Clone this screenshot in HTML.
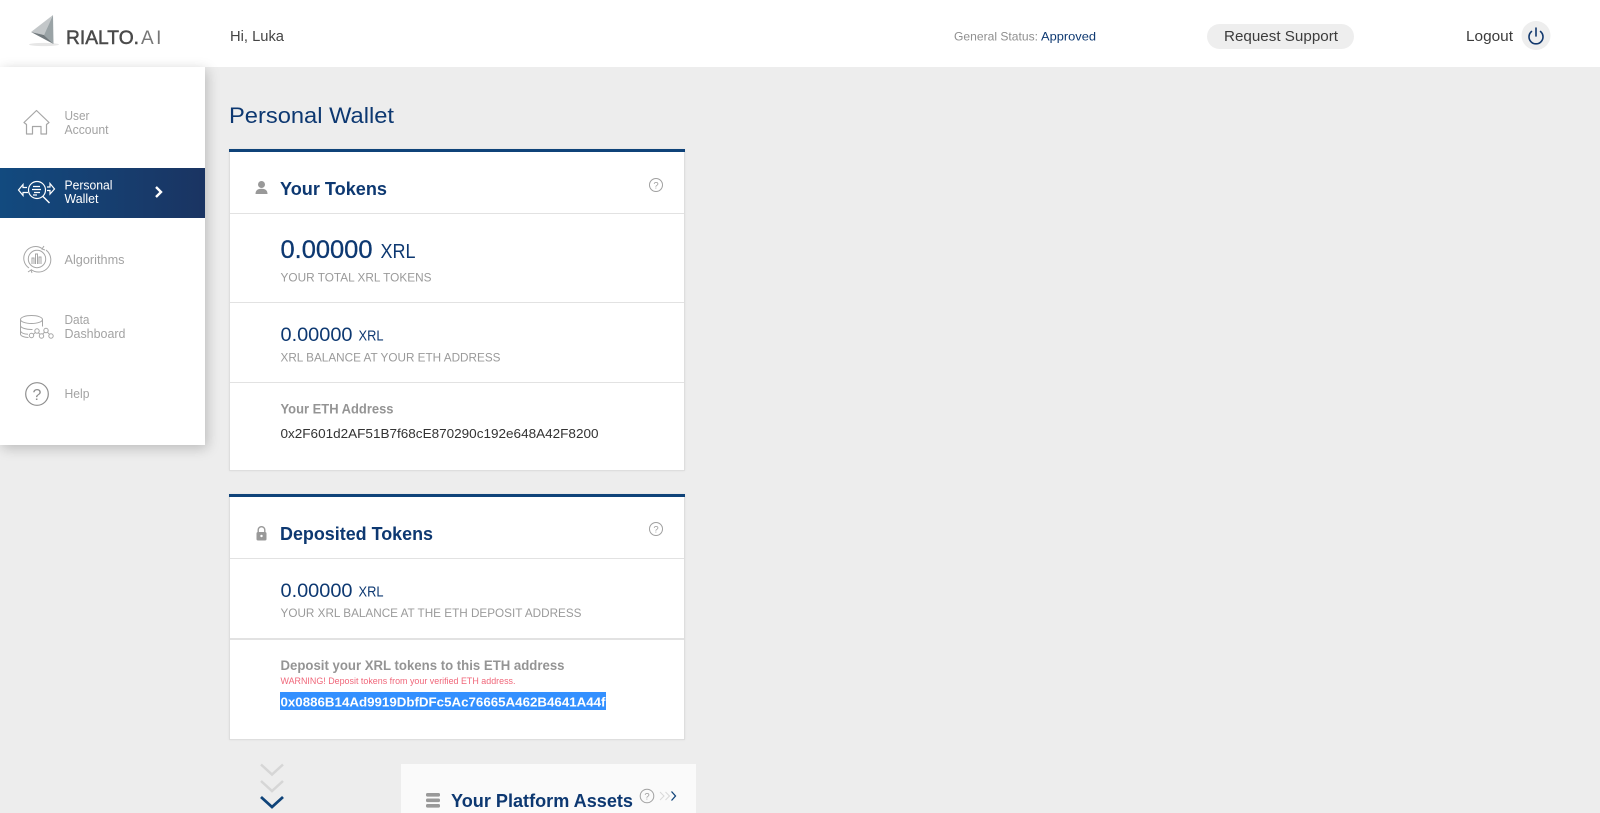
<!DOCTYPE html>
<html lang="en">
<head>
<meta charset="utf-8">
<title>Personal Wallet</title>
<style>
html,body{margin:0;padding:0;width:1600px;height:813px;overflow:hidden;background:#ededed}
body{position:relative;font-family:"Liberation Sans",sans-serif}
.b{position:absolute;box-sizing:border-box}
.top{left:0;top:0;width:1600px;height:67px;background:#fff}
.side{left:0;top:67px;width:205px;height:378px;background:#fff;box-shadow:2px 3px 12px rgba(0,0,0,.22)}
.act{left:0;top:168px;width:205px;height:50px;background:linear-gradient(90deg,#124a7f,#1a3462)}
.card{left:229px;width:456px;background:#fff;border:1px solid #dedede;border-top:0;box-shadow:0 0 2px rgba(0,0,0,.06)}
.bar{left:229px;width:456px;height:3px;background:#0f4379}
.ln{left:230px;width:454px;height:1px;background:#e2e2e2}
.plat{left:401px;top:764px;width:295px;height:49px;background:#fafafa}
.sel{left:280px;top:692px;width:326px;height:18px;background:#3390ff}
.pill{left:1207px;top:24px;width:147px;height:25px;border-radius:13px;background:#eeeeee}
svg{position:absolute;left:0;top:0}
text{font-family:"Liberation Sans",sans-serif}
.n{fill:#0d3871}
.g{fill:#9a9a9a}
.m{fill:#a3a3a3;font-size:12.5px}
.h{font-weight:700;font-size:18px;fill:#0d3871}
.i{fill:none;stroke:#999;stroke-width:1}
</style>
</head>
<body>
<div class="b top"></div>
<div class="b side"></div>
<div class="b act"></div>
<div class="b pill"></div>
<div class="b card" style="top:149px;height:322px"></div>
<div class="b bar" style="top:149px"></div>
<div class="b ln" style="top:213px"></div>
<div class="b ln" style="top:302px"></div>
<div class="b ln" style="top:382px"></div>
<div class="b card" style="top:494px;height:246px"></div>
<div class="b bar" style="top:494px"></div>
<div class="b ln" style="top:558px"></div>
<div class="b ln" style="top:638px;height:2px"></div>
<div class="b sel"></div>
<div class="b plat"></div>

<svg width="1600" height="813" viewBox="0 0 1600 813">
  <!-- logo -->
  <ellipse cx="44" cy="44.5" rx="15" ry="1.6" fill="#e6e6e6"/>
  <path d="M53 15L31 32L44 35Z" fill="#c3c7c9"/>
  <path d="M53 15L44 35L53.5 44Z" fill="#9aa3a6"/>
  <path d="M31 32L44 35L53.5 44Z" fill="#727a7e"/>
  <text x="66" y="44" font-size="19.500" fill="#4a4a4a" stroke="#4a4a4a" stroke-width=".5" textLength="73" lengthAdjust="spacingAndGlyphs">RIALTO.</text>
  <text x="141" y="44" font-size="19" fill="#777" letter-spacing="2.500">AI</text>

  <!-- header -->
  <text x="230" y="41" font-size="14.5" fill="#444" textLength="54" lengthAdjust="spacingAndGlyphs">Hi, Luka</text>
  <text x="954" y="40.5" font-size="12" fill="#8f8f8f" textLength="84" lengthAdjust="spacingAndGlyphs">General Status:</text>
  <text x="1041" y="40.5" font-size="12" fill="#0d3871" textLength="55" lengthAdjust="spacingAndGlyphs">Approved</text>
  <text x="1224" y="41" font-size="14.5" fill="#3c3c3c" textLength="114" lengthAdjust="spacingAndGlyphs">Request Support</text>
  <text x="1466" y="41" font-size="14.5" fill="#3c3c3c" textLength="47" lengthAdjust="spacingAndGlyphs">Logout</text>
  <circle cx="1536" cy="35.5" r="14.5" fill="#eeeeee"/>
  <path d="M1531.500 31.500a7 7 0 1 0 9 0" fill="none" stroke="#12386d" stroke-width="1.6" stroke-linecap="round"/>
  <path d="M1536 28v8" fill="none" stroke="#12386d" stroke-width="1.6" stroke-linecap="round"/>

  <!-- sidebar text -->
  <text class="m" x="64.500" y="120" textLength="25" lengthAdjust="spacingAndGlyphs">User</text>
  <text class="m" x="64.500" y="134" textLength="44" lengthAdjust="spacingAndGlyphs">Account</text>
  <text x="64.500" y="189.5" font-size="12.5" fill="#fff" textLength="48" lengthAdjust="spacingAndGlyphs">Personal</text>
  <text x="64.500" y="203" font-size="12.5" fill="#fff" textLength="34" lengthAdjust="spacingAndGlyphs">Wallet</text>
  <text class="m" x="64.500" y="264" textLength="60" lengthAdjust="spacingAndGlyphs">Algorithms</text>
  <text class="m" x="64.500" y="324" textLength="25" lengthAdjust="spacingAndGlyphs">Data</text>
  <text class="m" x="64.500" y="338" textLength="61" lengthAdjust="spacingAndGlyphs">Dashboard</text>
  <text class="m" x="64.500" y="398" textLength="25" lengthAdjust="spacingAndGlyphs">Help</text>
  <path d="M156 187l5 5l-5 5" fill="none" stroke="#fff" stroke-width="2.4"/>

  <!-- house -->
  <path d="M24 122.500L36.500 110.500L49 122.500L46.500 124.500V134H41V126.500H32.500V134H26.500V124.500Z" fill="none" stroke="#a6a6a6" stroke-width="1.200" stroke-linejoin="round"/>
  <!-- wallet icon -->
  <g fill="none" stroke="#fff" stroke-width="1.200">
    <circle cx="37" cy="190" r="8.500"/>
    <path d="M43 196.500l6.500 6.500" stroke-width="1.400"/>
    <path d="M33 186.500h7M32 189.500h9M34 192.500h6M33 195h4"/>
    <path d="M27 187.500h-4v-3l-4.500 5.500l4.500 5.500v-3h5"/>
    <path d="M47 187h3v-3.500l4.500 5.500l-4.500 5v-3.500h-3"/>
  </g>
  <!-- algorithms icon -->
  <g fill="none" stroke="#a6a6a6" stroke-width="1">
    <path d="M29 268a11.500 11.500 0 0 1 13-19.500M46 250a11.500 11.500 0 0 1-15 19.500"/>
    <circle cx="37" cy="259" r="8.700"/>
    <path d="M32 264v-6h2v6M35.500 264v-10h2v10M39 264v-7h2v7"/>
    <path d="M44 246l-2 3l3 1M28 272l3-2l1 3"/>
  </g>
  <!-- data icon -->
  <g fill="none" stroke="#a6a6a6" stroke-width="1">
    <ellipse cx="31.500" cy="319.500" rx="11" ry="4"/>
    <path d="M20.500 319.500v14.500c0 2 4 3.500 8 3.500M20.500 325.500c0 2.500 6 4.200 12 4M20.500 331c.5 1.800 3.500 3 7.500 3.300M42.500 319.500v7"/>
    <circle cx="31.500" cy="335.500" r="2.200"/><circle cx="37" cy="331" r="2.200"/><circle cx="41.500" cy="336" r="2.200"/><circle cx="46" cy="330.500" r="2.200"/><circle cx="51" cy="336" r="2.200"/>
    <path d="M33.300 334.200l2.200-1.700M38.300 332.700l1.900 1.700M42.700 334l2.100-2M47.500 332.300l2 2"/>
  </g>
  <!-- help icon -->
  <circle cx="37" cy="394" r="11.300" fill="none" stroke="#8e8e8e" stroke-width="1.200"/>
  <text x="37" y="400" font-size="16" fill="#8e8e8e" text-anchor="middle">?</text>

  <!-- main -->
  <text x="229" y="123" font-size="22" fill="#0d3871" textLength="165" lengthAdjust="spacingAndGlyphs">Personal Wallet</text>

  <!-- your tokens -->
  <circle cx="261.500" cy="184.500" r="3.500" fill="#999"/>
  <path d="M255.500 194c0-4 2.500-5.300 6-5.300s6 1.300 6 5.300z" fill="#999"/>
  <text class="h" x="280" y="195" textLength="107" lengthAdjust="spacingAndGlyphs">Your Tokens</text>
  <circle cx="656" cy="185" r="6.500" fill="none" stroke="#a0a0a0"/>
  <text x="656" y="188.500" font-size="9.500" fill="#a0a0a0" text-anchor="middle">?</text>
  <text class="n" x="280.500" y="258" font-size="25" stroke="#0d3871" stroke-width=".3" textLength="92" lengthAdjust="spacingAndGlyphs">0.00000</text>
  <text class="n" x="380.500" y="258" font-size="20" textLength="35" lengthAdjust="spacingAndGlyphs">XRL</text>
  <text class="g" x="280.500" y="281.500" font-size="12" textLength="151" lengthAdjust="spacingAndGlyphs">YOUR TOTAL XRL TOKENS</text>

  <text class="n" x="280.500" y="341" font-size="19.500" textLength="72" lengthAdjust="spacingAndGlyphs">0.00000</text>
  <text class="n" x="358.500" y="340.500" font-size="15" textLength="25" lengthAdjust="spacingAndGlyphs">XRL</text>
  <text class="g" x="280.500" y="361.500" font-size="12" textLength="220" lengthAdjust="spacingAndGlyphs">XRL BALANCE AT YOUR ETH ADDRESS</text>
  <text x="280.500" y="413.500" font-size="13.500" font-weight="700" fill="#949494" textLength="113" lengthAdjust="spacingAndGlyphs">Your ETH Address</text>
  <text x="280.500" y="438" font-size="13" fill="#333" textLength="318" lengthAdjust="spacingAndGlyphs">0x2F601d2AF51B7f68cE870290c192e648A42F8200</text>

  <!-- deposited -->
  <path d="M258.200 532v-2a3.300 3.300 0 0 1 6.600 0V532" fill="none" stroke="#999" stroke-width="1.400"/>
  <rect x="256.500" y="532" width="10" height="8.500" rx="1.500" fill="#999"/>
  <circle cx="261.500" cy="536" r="1.200" fill="#fff"/>
  <text class="h" x="280" y="540" textLength="153" lengthAdjust="spacingAndGlyphs">Deposited Tokens</text>
  <circle cx="656" cy="529" r="6.500" fill="none" stroke="#a0a0a0"/>
  <text x="656" y="532.500" font-size="9.500" fill="#a0a0a0" text-anchor="middle">?</text>
  <text class="n" x="280.500" y="597" font-size="19.500" textLength="72" lengthAdjust="spacingAndGlyphs">0.00000</text>
  <text class="n" x="358.500" y="596.500" font-size="15" textLength="25" lengthAdjust="spacingAndGlyphs">XRL</text>
  <text class="g" x="280.500" y="617" font-size="12" textLength="301" lengthAdjust="spacingAndGlyphs">YOUR XRL BALANCE AT THE ETH DEPOSIT ADDRESS</text>
  <text x="280.500" y="670" font-size="13.500" font-weight="700" fill="#949494" textLength="284" lengthAdjust="spacingAndGlyphs">Deposit your XRL tokens to this ETH address</text>
  <text x="280.500" y="684" font-size="9" fill="#f0677a" textLength="235" lengthAdjust="spacingAndGlyphs">WARNING! Deposit tokens from your verified ETH address.</text>
  <text x="280.500" y="706.500" font-size="13" font-weight="700" fill="#fff" textLength="325" lengthAdjust="spacingAndGlyphs">0x0886B14Ad9919DbfDFc5Ac76665A462B4641A44f</text>

  <!-- chevrons -->
  <path d="M261 764.500l11 10l11-10" fill="none" stroke="#d6d6d6" stroke-width="2.500"/>
  <path d="M261 781l11 10l11-10" fill="none" stroke="#d6d6d6" stroke-width="2.500"/>
  <path d="M261 797l11 10l11-10" fill="none" stroke="#0f4379" stroke-width="2.800"/>

  <!-- platform -->
  <rect x="426" y="793" width="14" height="3.600" rx="1.500" fill="#999"/>
  <rect x="426" y="798.500" width="14" height="3.600" rx="1.500" fill="#999"/>
  <rect x="426" y="804" width="14" height="3.600" rx="1.500" fill="#999"/>
  <text class="h" x="451" y="807" textLength="182" lengthAdjust="spacingAndGlyphs">Your Platform Assets</text>
  <circle cx="647" cy="796" r="6.800" fill="none" stroke="#a0a0a0"/>
  <text x="647" y="799.500" font-size="9.500" fill="#a0a0a0" text-anchor="middle">?</text>
  <path d="M660 792l4 4l-4 4M665.500 792l4 4l-4 4" fill="none" stroke="#d8d8d8" stroke-width="1"/>
  <path d="M671.500 791.500l4 4.500l-4 4.500" fill="none" stroke="#0f4379" stroke-width="1.300"/>
</svg>
</body>
</html>
